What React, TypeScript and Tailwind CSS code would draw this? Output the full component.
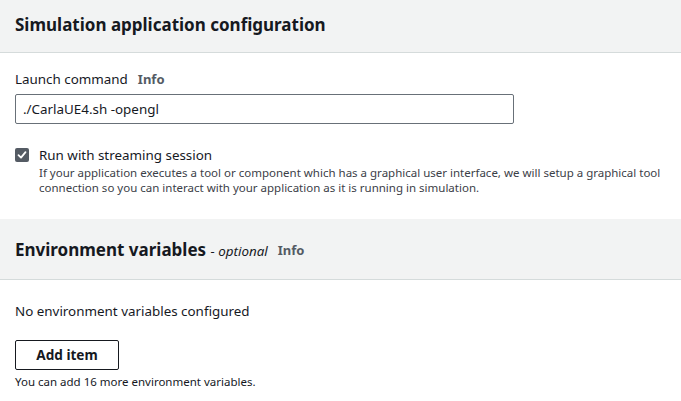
export default function App() {
  return (
    <div className="w-[681px] h-[401px] overflow-hidden bg-white text-[#16191f]" style={{ fontFamily: '"Noto Sans", sans-serif' }}>
      <div className="h-[53px] bg-[#f2f3f3] border-b border-[#d5dbdb] flex items-center px-[15px]">
        <h2 className="text-[17px] font-bold leading-[22px] mt-[-2px]">Simulation application configuration</h2>
      </div>
      <div className="px-[15px] pt-[16px] h-[166px]">
        <div className="flex items-center gap-[10px] text-[13.4px] leading-[20px]">
          <span>Launch command</span>
          <span className="font-bold text-[#545b64] text-[13px]">Info</span>
        </div>
        <div className="mt-[5px] w-[499px] h-[30px] border border-[#687078] rounded-[2px] flex items-center px-[7px] text-[13.4px]">
          ./CarlaUE4.sh -opengl
        </div>
        <div className="mt-[22px] flex gap-[10px]">
          <div className="w-[14px] h-[14px] mt-[2px] rounded-[2px] bg-[#545b64] flex items-center justify-center shrink-0">
            <svg width="10" height="10" viewBox="0 0 10 10" fill="none">
              <path d="M1.5 5.2 L4 7.6 L8.5 2.2" stroke="white" strokeWidth="1.8" strokeLinecap="round" strokeLinejoin="round" />
            </svg>
          </div>
          <div>
            <div className="text-[13.4px] leading-[18px]">Run with streaming session</div>
            <div className="text-[11.5px] leading-[15px] text-[#3b4047] mt-[1px]">
              If your application executes a tool or component which has a graphical user interface, we will setup a graphical tool connection so you can interact with your application as it is running in simulation.
            </div>
          </div>
        </div>
      </div>
      <div className="h-[61px] bg-[#f2f3f3] border-b border-[#d5dbdb] flex items-center px-[15px] gap-[10px]">
        <h2 className="text-[17px] font-bold leading-[22px] mt-[2px]">Environment variables <span className="text-[13.4px] font-normal italic">- optional</span></h2>
        <span className="font-bold text-[#545b64] text-[13px] mt-[3px]">Info</span>
      </div>
      <div className="px-[15px] pt-[21px]">
        <div className="text-[13.4px] leading-[20px]">No environment variables configured</div>
        <button className="mt-[19px] w-[104px] h-[30px] border border-[#16191f] rounded-[2px] text-[13.6px] font-bold flex items-center justify-center">Add item</button>
        <div className="mt-[4px] text-[11.5px] leading-[16px] text-[#16191f]">You can add 16 more environment variables.</div>
      </div>
    </div>
  );
}
